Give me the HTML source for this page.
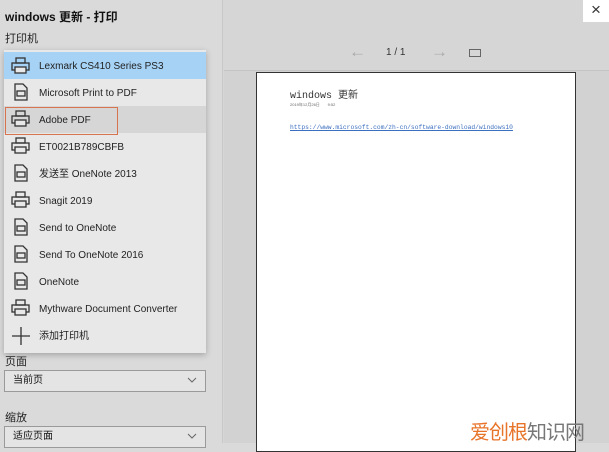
<!DOCTYPE html>
<html><head><meta charset="utf-8"><style>
*{margin:0;padding:0;box-sizing:border-box}
body{width:609px;height:443px;overflow:hidden;background:#dadada;font-family:"Liberation Sans","Noto Sans CJK SC",sans-serif;color:#111;position:relative}
.abs{position:absolute}
.title{left:5px;top:8px;font-size:12px;font-weight:bold}
.lbl{font-size:11px;color:#222}
.right{left:222px;top:0;width:387px;height:443px;background:#d6d6d6;border-left:1px solid #c8c8c8}
.prev{left:224px;top:70px;width:385px;height:373px;background:#d2d2d2;border-top:1px solid #c4c4c4}
.page{left:256px;top:72px;width:320px;height:380px;background:#fff;border:1px solid #333}
.list{left:4px;top:50px;width:202px;height:303px;background:#e8e8e8;box-shadow:0 2px 6px rgba(0,0,0,.25)}
.it{position:absolute;left:0;width:202px;height:27px;font-size:10px;line-height:29px;padding-left:35px;color:#222}
.sel{left:4px;width:202px;height:22px;background:#e4e4e4;border:1.5px solid #9a9a9a;font-size:10px;line-height:19px;padding-left:8px}
.chev{position:absolute;right:8px;top:6px}
</style></head><body>
<div class="abs right"></div>
<div class="abs" style="left:583px;top:0;width:26px;height:22px;background:#fff;font-size:17px;text-align:center;line-height:20px;color:#333">×</div>
<div class="abs" style="left:349px;top:42px;font-size:17px;color:#aaa">←</div>
<div class="abs" style="left:386px;top:47px;font-size:10px;color:#333">1 / 1</div>
<div class="abs" style="left:431px;top:42px;font-size:17px;color:#aaa">→</div>
<div class="abs" style="left:469px;top:49px;width:12px;height:8px;border:1px solid #666"></div>
<div class="abs prev"></div>
<div class="abs page">
<div class="abs" style="left:33px;top:13px;font-family:'Liberation Mono','Noto Sans CJK SC',monospace;font-size:10px;color:#333">windows 更新</div>
<div class="abs" style="left:33px;top:29px;font-size:4px;color:#666">2019年12月26日 &nbsp;&nbsp;&nbsp;&nbsp;&nbsp;&nbsp;9:52</div>
<div class="abs" style="left:33px;top:51px;font-family:'Liberation Mono',monospace;font-size:6.3px;color:#3b6fc0;text-decoration:underline;white-space:nowrap">https://www.microsoft.com/zh-cn/software-download/windows10</div>
</div>
<div class="abs title">windows 更新 - 打印</div>
<div class="abs lbl" style="left:5px;top:30px">打印机</div>
<div class="abs list">
<div class="it" style="top:2px;background:#a6d2f5">Lexmark CS410 Series PS3</div>
<div class="it" style="top:29px">Microsoft Print to PDF</div>
<div class="it" style="top:56px;background:#d6d6d6">Adobe PDF</div>
<div class="abs" style="left:1px;top:57px;width:113px;height:28px;border:1.5px solid #d8734f"></div>
<div class="it" style="top:83px">ET0021B789CBFB</div>
<div class="it" style="top:110px">发送至 OneNote 2013</div>
<div class="it" style="top:137px">Snagit 2019</div>
<div class="it" style="top:164px">Send to OneNote</div>
<div class="it" style="top:191px">Send To OneNote 2016</div>
<div class="it" style="top:218px">OneNote</div>
<div class="it" style="top:245px">Mythware Document Converter</div>
<div class="it" style="top:272px">添加打印机</div>
<svg class="abs" style="left:0;top:0" width="35" height="303" fill="none" stroke="#333" stroke-width="1.3">
<defs><g id="p"><rect x="12" y="6" width="9" height="5"/><rect x="8" y="11" width="17" height="7"/><rect x="11" y="15" width="11" height="6" fill="#e8e8e8"/></g>
<g id="d"><path d="M11 6h8l4 4v12h-12z"/><rect x="13" y="13" width="8" height="5"/></g></defs>
<use href="#p" y="2"/><use href="#d" y="28"/><use href="#p" y="55"/><use href="#p" y="82"/><use href="#d" y="109"/><use href="#p" y="136"/><use href="#d" y="163"/><use href="#d" y="190"/><use href="#d" y="217"/><use href="#p" y="244"/>
<path d="M8 286h18M17 277v18"/>
</svg>
</div>
<div class="abs lbl" style="left:5px;top:353px">页面</div>
<div class="abs sel" style="top:370px">当前页<svg class="chev" width="10" height="6"><path d="M1 1l4 4 4-4" stroke="#666" fill="none"/></svg></div>
<div class="abs lbl" style="left:5px;top:409px">缩放</div>
<div class="abs sel" style="top:426px">适应页面<svg class="chev" width="10" height="6"><path d="M1 1l4 4 4-4" stroke="#666" fill="none"/></svg></div>
<div class="abs" style="left:470px;top:416px;font-size:20px;white-space:nowrap;letter-spacing:-1px"><span style="color:#e8742a">爱创根</span><span style="color:#777">知识网</span></div>
</body></html>
